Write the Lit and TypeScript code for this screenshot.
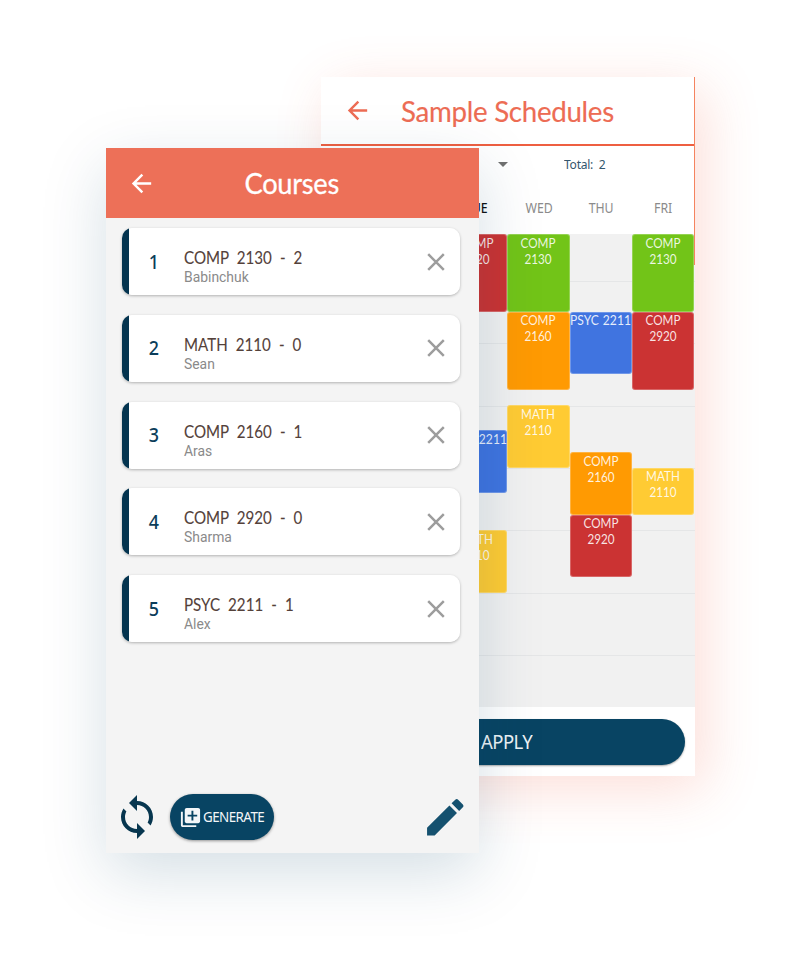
import { LitElement, html, css, svg } from "lit";
import { customElement, property } from "lit/decorators.js";

interface Lesson { label: string; start: number; length: number; tone: string }
interface Day { name: string; today?: boolean; lessons: Lesson[] }
interface Course { title: string; teacher: string }

const COURSES: Course[] = [
  { title: "COMP 2130 - 2", teacher: "Babinchuk" },
  { title: "MATH 2110 - 0", teacher: "Sean" },
  { title: "COMP 2160 - 1", teacher: "Aras" },
  { title: "COMP 2920 - 0", teacher: "Sharma" },
  { title: "PSYC 2211 - 1", teacher: "Alex" },
];

// start and length are minutes, counted from the top of the visible grid
const DAYS: Day[] = [
  { name: "", lessons: [] },
  { name: "TUE", today: true, lessons: [
    { label: "COMP 2920", start: 0, length: 75, tone: "red" },
    { label: "PSYC 2211", start: 189, length: 60, tone: "blue" },
    { label: "MATH 2110", start: 285, length: 60, tone: "yellow" },
  ] },
  { name: "WED", lessons: [
    { label: "COMP 2130", start: 0, length: 75, tone: "green" },
    { label: "COMP 2160", start: 75, length: 75, tone: "orange" },
    { label: "MATH 2110", start: 165, length: 60, tone: "yellow" },
  ] },
  { name: "THU", lessons: [
    { label: "PSYC 2211", start: 75, length: 60, tone: "blue" },
    { label: "COMP 2160", start: 210, length: 60, tone: "orange" },
    { label: "COMP 2920", start: 270, length: 60, tone: "red" },
  ] },
  { name: "FRI", lessons: [
    { label: "COMP 2130", start: 0, length: 75, tone: "green" },
    { label: "COMP 2920", start: 75, length: 75, tone: "red" },
    { label: "MATH 2110", start: 225, length: 45, tone: "yellow" },
  ] },
];
const PX_PER_MINUTE = 1.0395;

const backArrow = svg`<path d="M20 11H7.83l5.59-5.59L12 4l-8 8 8 8 1.41-1.41L7.83 13H20v-2z"/>`;

@customElement("schedule-screen")
class ScheduleScreen extends LitElement {
  static styles = css`
    :host { display: flex; flex-direction: column; box-sizing: border-box; background: #fff;
      font-family: "Noto Sans", sans-serif;
      box-shadow: 10px 13px 52px rgba(238, 90, 60, 0.2); }
    .edge { position: absolute; right: 0; top: 0; width: 1px; height: 188px; background: #f5835f; }
    .bar { display: flex; align-items: center; height: 67px; border-bottom: 2px solid #ee5f41; color: #ed6c54; }
    .bar svg { width: 29px; height: 29px; margin-left: 22px; fill: currentColor; }
    .bar h1 { margin: 0 0 0 29px; font: 400 29px/40px Lato, sans-serif; letter-spacing: -0.3px; white-space: nowrap;
      transform: scaleX(0.955); transform-origin: 0 50%; -webkit-text-stroke: 0.15px currentColor; }
    .filter { display: flex; align-items: center; height: 36px; color: #33566d; }
    .caret { margin-left: 177px; border: 5px solid transparent; border-top-color: #707070; border-bottom: 0; }
    .total { margin-left: 56px; letter-spacing: -0.3px; word-spacing: 3px; font-size: 13px; transform: scaleX(0.93); transform-origin: 0 50%; }
    .names { display: grid; grid-template-columns: repeat(5, 62.3px); justify-content: end; padding-right: 0.5px; height: 52px; line-height: 52px;
      text-align: center; font-size: 14px; color: #8b8b8b; }
    .names span { transform: scaleX(0.88); }
    .names .today { color: #111; font-weight: 500; }
    .grid { display: grid; grid-template-columns: repeat(5, 62.3px); justify-content: end; padding-right: 0.8px; height: 473px;
      background: repeating-linear-gradient(#e5e6e7 0 1px, #f1f1f1 1px 62.37px) 0 47px, #f1f1f1;
      background-repeat: no-repeat; }
    .day { display: flex; flex-direction: column; }
    .lesson { flex: none; display: flex; justify-content: center; align-items: flex-start; box-sizing: border-box; border-radius: 3px;
      color: rgba(255, 255, 255, 0.88); font: 400 13.3px/16px Lato, sans-serif; text-align: center;
      border: 0.5px solid rgba(255,255,255,.25); }
    .lesson span { width: 46px; transform: scaleX(0.88); margin-top: -0.5px; }
    .blue span { width: auto; flex: none; white-space: nowrap; word-spacing: 1px; transform: scaleX(0.91); }
    .green { background: #72c418; } .orange { background: #ff9a02; } .yellow { background: #ffcb33; }
    .red { background: #cb3333; } .blue { background: #4074e0; }
    .foot { flex: 1; display: flex; align-items: center; padding: 0 10.5px 0 8.5px; }
    .apply { flex: 1; height: 46px; border-radius: 23px; background: #084463; color: #eef3f6; text-align: center;
      font-size: 19.3px; line-height: 45px; letter-spacing: -0.6px; box-shadow: 0 1px 2px rgba(0,0,0,.35); }
    .apply span { display: inline-block; transform: scaleX(0.96); }
  `;
  render() {
    return html`
      <div class="edge"></div>
      <div class="bar"><svg viewBox="0 0 24 24">${backArrow}</svg><h1>Sample Schedules</h1></div>
      <div class="filter"><span class="caret"></span><span class="total">Total: 2</span></div>
      <div class="names">${DAYS.map(d => html`<span class=${d.today ? "today" : "name"}>${d.name}</span>`)}</div>
      <div class="grid">${DAYS.map(d => {
        let end = 0;
        return html`<div class="day">${d.lessons.map(l => {
          const gap = (l.start - end) * PX_PER_MINUTE;
          end = l.start + l.length;
          return html`<div class="lesson ${l.tone}" style="margin-top:${gap}px;height:${l.length * PX_PER_MINUTE}px"><span>${l.label}</span></div>`;
        })}</div>`;
      })}</div>
      <div class="foot"><div class="apply"><span>APPLY</span></div></div>`;
  }
}

@customElement("course-card")
class CourseCard extends LitElement {
  @property({ type: Number }) index = 0;
  @property({ attribute: false }) course!: Course;
  static styles = css`
    :host { display: flex; align-items: center; height: 67px; border-radius: 10px; overflow: hidden;
      background: linear-gradient(90deg, #04344f 7px, #fff 7px);
      box-shadow: 0 1px 3px rgba(0, 0, 0, 0.28); }
    .num { width: 62px; text-align: center; font: 500 19px/24px "Noto Sans", sans-serif; color: #0b3d5a; }
    .num span { display: inline-block; transform: translateX(0.5px) scaleX(0.94); }
    .text { flex: 1; padding-top: 10px; white-space: nowrap; }
    .title { font: 400 18px/22px Lato, sans-serif; color: #54413a; word-spacing: 5px; transform: scaleX(0.84); transform-origin: 0 50%;
      -webkit-text-stroke: 0.1px currentColor; }
    .teacher { font: 400 13.9px/19px Roboto, sans-serif; color: #8a8a8a; }
    .close { width: 18px; height: 18px; margin-right: 15.5px; stroke: #9d9d9d; stroke-width: 2.5; fill: none; }
  `;
  render() {
    return html`<div class="num"><span>${this.index}</span></div>
      <div class="text"><div class="title">${this.course.title}</div><div class="teacher">${this.course.teacher}</div></div>
      <svg class="close" viewBox="0 0 18 18"><path d="M1.2 1.2 16.8 16.8M16.8 1.2 1.2 16.8"/></svg>`;
  }
}

@customElement("courses-screen")
class CoursesScreen extends LitElement {
  static styles = css`
    :host { display: flex; flex-direction: column; background: #f4f4f4;
      box-shadow: 0 20px 60px rgba(8, 68, 99, 0.17); }
    .bar { display: grid; grid-template-columns: 70px 1fr 70px; align-items: center; height: 70px; background: #ed7058; color: #fff; }
    .bar svg { width: 29px; height: 29px; margin-left: 20.5px; fill: currentColor; }
    .bar h1 { margin: 0 1.5px 0 0; padding-bottom: 1px; text-align: center; font: 400 29px/40px Lato, sans-serif; letter-spacing: -0.3px;
      transform: scaleX(0.94); -webkit-text-stroke: 0.3px currentColor; }
    .list { flex: 1; display: flex; flex-direction: column; gap: 19.8px; padding: 10.1px 19px 0 16px; }
    .tools { display: flex; align-items: center; height: 72px; padding: 0 10px 0 7px; }
    .sync { width: 48px; height: 48px; fill: #07364f; }
    .generate { display: flex; align-items: center; justify-content: center; gap: 1px; width: 104px; height: 46px; margin-left: 9px;
      border-radius: 23px; background: #084463; color: #f3f6f8; font: 400 14.2px/20px "Noto Sans", sans-serif; letter-spacing: -0.6px;
      box-shadow: 0 1px 3px rgba(0,0,0,.4); }
    .generate svg { flex: none; width: 23px; height: 23px; fill: currentColor; }
    .generate span { width: 62px; white-space: nowrap; transform: scaleX(0.945); transform-origin: 0 50%; }
    .edit { width: 48.5px; height: 48.5px; margin-left: auto; fill: #15516f; }
  `;
  render() {
    return html`
      <div class="bar"><svg viewBox="0 0 24 24">${backArrow}</svg><h1>Courses</h1></div>
      <div class="list">${COURSES.map((c, i) => html`<course-card .index=${i + 1} .course=${c}></course-card>`)}</div>
      <div class="tools">
        <svg class="sync" viewBox="0 0 24 24"><path d="M12 4V1L8 5l4 4V6c3.31 0 6 2.69 6 6 0 1.01-.25 1.97-.7 2.8l1.46 1.46C19.54 15.03 20 13.57 20 12c0-4.42-3.58-8-8-8zm0 14c-3.31 0-6-2.69-6-6 0-1.01.25-1.97.7-2.8L5.24 7.74C4.46 8.97 4 10.43 4 12c0 4.42 3.58 8 8 8v3l4-4-4-4v3z"/></svg>
        <div class="generate"><svg viewBox="0 0 24 24"><path d="M4 6H2v14c0 1.1.9 2 2 2h14v-2H4V6zm16-4H8c-1.1 0-2 .9-2 2v12c0 1.1.9 2 2 2h12c1.1 0 2-.9 2-2V4c0-1.1-.9-2-2-2zm-1 9h-4v4h-2v-4H9V9h4V5h2v4h4v2z"/></svg><span>GENERATE</span></div>
        <svg class="edit" viewBox="0 0 24 24"><path d="M3 17.25V21h3.75L17.81 9.94l-3.75-3.75L3 17.25zM20.71 7.04c.39-.39.39-1.02 0-1.41l-2.34-2.34c-.39-.39-1.02-.39-1.41 0l-1.83 1.83 3.75 3.75 1.83-1.83z"/></svg>
      </div>`;
  }
}

@customElement("app-root")
class AppRoot extends LitElement {
  static styles = css`
    :host { display: block; position: relative; width: 800px; height: 967px; overflow: hidden; background: #fff; }
    .back { position: absolute; left: 321px; top: 77px; width: 374px; height: 699px; }
    .front { position: absolute; left: 106px; top: 148px; width: 373px; height: 705px; }
  `;
  render() {
    return html`<schedule-screen class="back"></schedule-screen><courses-screen class="front"></courses-screen>`;
  }
}
